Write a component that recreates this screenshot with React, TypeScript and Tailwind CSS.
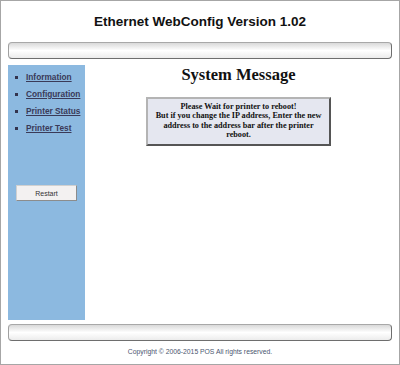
import React from "react";

const items = ["Information", "Configuration", "Printer Status", "Printer Test"];

function Bar() {
  return (
    <div className="mx-[7px] h-[17px] rounded-[4px] border border-t-[#a8a8a8] border-l-[#a0a0a0] border-r-[#6e6e6e] border-b-[#6e6e6e] bg-gradient-to-b from-[#d9d9d9] via-[#ffffff] to-[#ececec]" />
  );
}

export default function App() {
  return (
    <div
      className="w-[400px] h-[365px] border border-[#a6a6a6] bg-white flex flex-col overflow-hidden"
      style={{ fontFamily: '"Liberation Sans", Arial, sans-serif' }}
    >
      <div className="pt-[13px] mb-[12px] text-center text-[13.5px] leading-[16px] font-bold text-[#111]">
        Ethernet WebConfig Version 1.02
      </div>
      <Bar />
      <div className="mx-[7px] mt-[6px] h-[255px] flex">
        <div className="w-[77px] shrink-0 bg-[#8cb9e0] pt-[4px] flex flex-col">
          {items.map((t) => (
            <div key={t} className="h-[17px] flex items-center">
              <span className="ml-[7px] w-[3px] h-[3px] bg-[#33334d] shrink-0" />
              <a
                href="#"
                className="ml-[8px] text-[8.3px] font-bold text-[#3a3a58] underline whitespace-nowrap leading-[17px]"
              >
                {t}
              </a>
            </div>
          ))}
          <button className="mt-[48px] ml-[8px] w-[61px] h-[16px] bg-[#f3f1f1] border border-t-[#d0d0d0] border-l-[#d0d0d0] border-r-[#8c8c8c] border-b-[#8c8c8c] text-[7px] text-[#333] leading-none">
            Restart
          </button>
        </div>
        <div className="flex-1 flex flex-col items-center">
          <div
            className="mt-[2px] text-[16.5px] leading-none font-bold text-[#111]"
            style={{ fontFamily: '"Liberation Serif", "Times New Roman", serif' }}
          >
            System Message
          </div>
          <div
            className="mt-[13px] w-[185px] h-[49px] bg-[#e5e7f0] border-2 border-t-[#b4b4b4] border-l-[#b4b4b4] border-r-[#555] border-b-[#555] pt-[3px] px-[4px] text-center text-[8.2px] leading-[9.5px] font-bold text-[#111]"
            style={{ fontFamily: '"Liberation Serif", "Times New Roman", serif' }}
          >
            Please Wait for printer to reboot!
            <br />
            But if you change the IP address, Enter the new address to the address bar after the printer reboot.
          </div>
        </div>
      </div>
      <div className="mt-[4px]">
        <Bar />
      </div>
      <div className="mt-[6px] text-center text-[6.8px] leading-[10px] text-[#4b5670]">
        Copyright © 2006-2015 POS All rights reserved.
      </div>
    </div>
  );
}
